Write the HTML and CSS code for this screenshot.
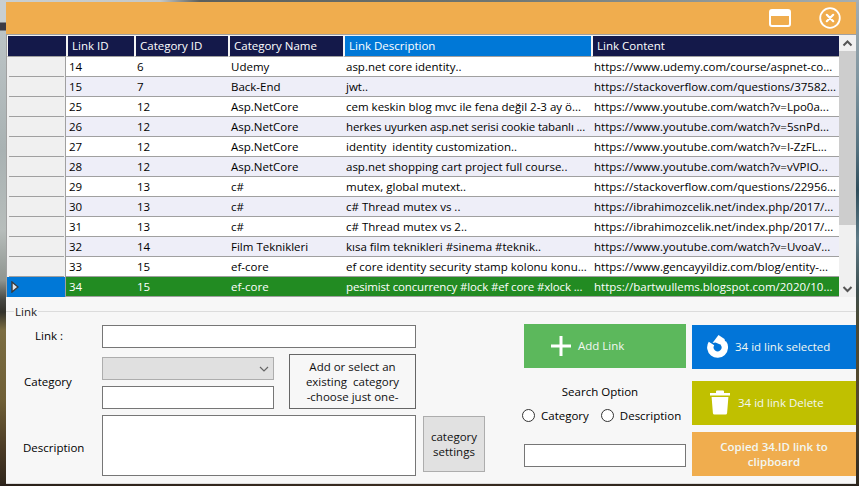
FILE: index.html
```html
<!DOCTYPE html>
<html lang="en">
<head>
    <meta charset="UTF-8">
    <meta name="viewport" content="width=device-width, initial-scale=1.0">
    <title>Links</title>
    <link rel="stylesheet" href="styles.css">
</head>
<body>
    <div class="window">
        <div class="titlebar">
            <svg class="title-icon" width="22" height="18" viewBox="0 0 22 18"><rect x="1" y="1" width="20" height="16" rx="2" fill="none" stroke="#fff" stroke-width="2"/><rect x="1" y="1" width="20" height="6" rx="1" fill="#fff"/></svg>
            <svg class="title-icon" width="22" height="22" viewBox="0 0 22 22"><circle cx="11" cy="11" r="9.8" fill="none" stroke="#fff" stroke-width="1.8"/><path d="M7.8 7.8l6.4 6.4M14.2 7.8l-6.4 6.4" stroke="#fff" stroke-width="2.2" stroke-linecap="round"/></svg>
        </div>

        <div class="grid-wrap">
            <table class="grid">
                <colgroup>
                    <col class="c-head"><col class="c-id"><col class="c-cat"><col class="c-name"><col class="c-text"><col class="c-text">
                </colgroup>
                <thead>
                    <tr>
                        <th class="corner"></th>
                        <th>Link ID</th>
                        <th>Category ID</th>
                        <th>Category Name</th>
                        <th class="sorted">Link Description</th>
                        <th>Link Content</th>
                    </tr>
                </thead>
                <tbody>
                    <tr><td class="row-head"></td><td>14</td><td>6</td><td>Udemy</td><td>asp.net core identity..</td><td>https://www.udemy.com/course/aspnet-co...</td></tr>
                    <tr class="alt"><td class="row-head"></td><td>15</td><td>7</td><td>Back-End</td><td>jwt..</td><td>https://stackoverflow.com/questions/37582...</td></tr>
                    <tr><td class="row-head"></td><td>25</td><td>12</td><td>Asp.NetCore</td><td>cem keskin blog mvc ile fena değil 2-3 ay ö...</td><td>https://www.youtube.com/watch?v=Lpo0a...</td></tr>
                    <tr class="alt"><td class="row-head"></td><td>26</td><td>12</td><td>Asp.NetCore</td><td class="tight">herkes uyurken asp.net serisi cookie tabanlı ...</td><td>https://www.youtube.com/watch?v=5snPd...</td></tr>
                    <tr><td class="row-head"></td><td>27</td><td>12</td><td>Asp.NetCore</td><td>identity&nbsp; identity customization..</td><td>https://www.youtube.com/watch?v=I-ZzFL...</td></tr>
                    <tr class="alt"><td class="row-head"></td><td>28</td><td>12</td><td>Asp.NetCore</td><td>asp.net shopping cart project full course..</td><td>https://www.youtube.com/watch?v=vVPIO...</td></tr>
                    <tr><td class="row-head"></td><td>29</td><td>13</td><td>c#</td><td>mutex, global mutext..</td><td>https://stackoverflow.com/questions/22956...</td></tr>
                    <tr class="alt"><td class="row-head"></td><td>30</td><td>13</td><td>c#</td><td>c# Thread mutex vs ..</td><td>https://ibrahimozcelik.net/index.php/2017/...</td></tr>
                    <tr><td class="row-head"></td><td>31</td><td>13</td><td>c#</td><td>c# Thread mutex vs 2..</td><td>https://ibrahimozcelik.net/index.php/2017/...</td></tr>
                    <tr class="alt"><td class="row-head"></td><td>32</td><td>14</td><td>Film Teknikleri</td><td>kısa film teknikleri #sinema #teknik..</td><td>https://www.youtube.com/watch?v=UvoaV...</td></tr>
                    <tr><td class="row-head"></td><td>33</td><td>15</td><td>ef-core</td><td>ef core identity security stamp kolonu konu...</td><td>https://www.gencayyildiz.com/blog/entity-...</td></tr>
                    <tr class="selected">
                        <td class="row-head">
                            <svg class="row-arrow" width="8" height="12" viewBox="0 0 8 12"><path d="M1 1l6 5-6 5z" fill="#dfe6ec" stroke="#3a3a3a" stroke-width="1.4"/></svg>
                        </td>
                        <td>34</td><td>15</td><td>ef-core</td><td class="tight">pesimist concurrency #lock #ef core #xlock ...</td><td>https://bartwullems.blogspot.com/2020/10...</td>
                    </tr>
                </tbody>
            </table>
            <div class="scrollbar">
                <svg class="scroll-btn" width="17" height="15" viewBox="0 0 17 15"><path d="M4.5 9.5l4-4 4 4" fill="none" stroke="#555" stroke-width="2"/></svg>
                <div class="scroll-track"><div class="scroll-thumb"></div></div>
                <svg class="scroll-btn" width="17" height="15" viewBox="0 0 17 15"><path d="M4.5 5l4 4 4-4" fill="none" stroke="#555" stroke-width="2"/></svg>
            </div>
        </div>

        <div class="group">
            <div class="legend"><span>Link</span></div>
            <div class="group-body">
                <div class="form-grid">
                    <label class="lbl lbl-link">Link :</label>
                    <input class="field wide" type="text">

                    <label class="lbl lbl-cat">Category</label>
                    <div class="cat-stack">
                        <div class="combo">
                            <svg width="10" height="6" viewBox="0 0 10 6"><path d="M1 1l4 4 4-4" fill="none" stroke="#666" stroke-width="1.2"/></svg>
                        </div>
                        <input class="field" type="text">
                    </div>
                    <div class="note">Add or select an<br>existing&nbsp; category<br>-choose just one-</div>

                    <label class="lbl lbl-desc">Description</label>
                    <textarea class="field wide area"></textarea>
                    <button class="settings" type="button">category<br>settings</button>
                </div>

                <div class="search-col">
                    <button class="action add" type="button">
                        <svg width="20" height="20" viewBox="0 0 20 20"><path d="M10 0v20M0 10h20" stroke="#fff" stroke-width="3"/></svg>
                        <span>Add Link</span>
                    </button>
                    <div class="search-title">Search Option</div>
                    <div class="radios">
                        <label class="radio"><input type="radio" name="opt">Category</label>
                        <label class="radio"><input type="radio" name="opt">Description</label>
                    </div>
                    <input class="field search" type="text">
                </div>

                <div class="action-col">
                    <button class="action select" type="button">
                        <svg width="22" height="23" viewBox="0 0 22 23"><path d="M5.500 8.500A7.200 7.200 0 1 0 17.300 8" fill="none" stroke="#fff" stroke-width="6.500"/><path d="M12.500 0l6 4 2 8-7.500-3-3.500-1.500-3 .5z" fill="#fff"/></svg>
                        <span>34 id link selected</span>
                    </button>
                    <button class="action remove" type="button">
                        <svg width="20" height="25" viewBox="0 0 20 25"><path d="M0 3h20v2.400H0zM6 1.500Q6 .5 7 .5h6q1 0 1 1V3H6z" fill="#fff"/><path d="M1.600 7h16.800l-1.300 16q-.1 1.500-1.600 1.500H4.500Q3 24.500 2.900 23z" fill="#fff"/></svg>
                        <span>34 id link Delete</span>
                    </button>
                    <button class="action copy" type="button">Copied 34.ID link to<br>clipboard</button>
                </div>
            </div>
        </div>
    </div>
</body>
</html>
```

FILE: styles.css
```css
html {
    background-color: #6b6f60;
}

body {
    margin: 0;
    height: 486px;
    overflow: hidden;
    font-family: 'Open Sans', 'Noto Sans', sans-serif;
    font-size: 11.5px;
    color: #000;
    background-image:
        linear-gradient(to right, #c9cfd1 0, #c4c8c8 160px, #5c5f5c 200px, #6f7672 500px, #a6afb2 859px),
        linear-gradient(to right, #2a211a 0, #3a2c20 400px, #29231c 859px),
        linear-gradient(to bottom, #c8cfd2 0, #c8cfd2 22px, #3c3a44 23px, #3c3a44 30px, #bcc4c6 31px, #a9b2b3 150px, #b7bdbb 230px, #8f9590 280px, #454641 300px, #33322b 312px, #7b6d42 330px, #6f5f36 400px, #4a3a25 450px, #2f261c 486px),
        linear-gradient(to bottom, #a2adb3 0, #7f95a0 80px, #53707e 150px, #2f4d5b 190px, #5f7c88 240px, #3e4f50 290px, #4b4a34 320px, #55482c 400px, #2e281e 486px);
    background-size: 100% 2px, 100% 2px, 6px 100%, 3px 100%;
    background-position: left top, left bottom, left top, right top;
    background-repeat: no-repeat;
}

.window {
    margin: 2px 3px 2px 6px;
    height: 482px;
    box-sizing: border-box;
    display: flex;
    flex-direction: column;
    background-color: #f7f7f7;
    border-bottom: 1px solid #dcdcdc;
}

.titlebar {
    height: 32px;
    flex: none;
    display: flex;
    justify-content: flex-end;
    align-items: center;
    gap: 28px;
    padding-right: 15px;
    background-color: #f0ad4e;
}

.title-icon {
    display: block;
}

.grid-wrap {
    display: flex;
    flex: none;
    height: 263px;
    box-sizing: border-box;
    border-top: 1px solid #a0a0a0;
    border-left: 1px solid #a0a0a0;
    background-color: #f0f0f0;
}

.grid {
    width: 832px;
    table-layout: fixed;
    border-collapse: separate;
    border-spacing: 0;
    align-self: flex-start;
    margin-top: 1px;
}

.c-head { width: 59px; }
.c-id { width: 68px; }
.c-cat { width: 94px; }
.c-name { width: 115px; }
.c-text { width: 248px; }

.grid th {
    height: 21px;
    padding: 0 0 1px 4px;
    box-sizing: border-box;
    text-align: left;
    font-weight: 400;
    color: #fff;
    background-color: #14194a;
    border-left: 2px solid #f4f4f4;
    border-bottom: 1px solid #a0a0a0;
    white-space: nowrap;
    overflow: hidden;
}

.grid th.corner {
    border-left: 1px solid #f4f4f4;
}

.grid th.sorted {
    background-color: #0078d7;
}

.grid td {
    height: 20px;
    padding: 0 0 0 3px;
    box-sizing: border-box;
    background-color: #fff;
    border-bottom: 1px solid #a0a0a0;
    white-space: nowrap;
    overflow: hidden;
}

.grid td.tight {
    letter-spacing: -0.15px;
}

.grid tr.alt td {
    background-color: #eeeef8;
}

.grid tr.selected td {
    background-color: #228b22;
    color: #fff;
}

.grid td.row-head,
.grid tr.alt td.row-head {
    padding: 0;
    border-bottom: none;
    border-right: 1px solid #a0a0a0;
    background: linear-gradient(#a0a0a0, #a0a0a0) no-repeat 2px bottom / 55px 1px, #f0f0f0;
}

.grid tr.selected td.row-head {
    background: #0078d7;
}

.row-arrow {
    display: block;
    margin-left: 4px;
}

.scrollbar {
    width: 17px;
    flex: none;
    display: flex;
    flex-direction: column;
    background-color: #f0f0f0;
    padding-top: 1px;
}

.scroll-btn {
    display: block;
    flex: none;
}

.scroll-track {
    flex: 1;
}

.scroll-thumb {
    height: 174px;
    background-color: #cdcdcd;
}

.group {
    flex: 1;
    padding-top: 7px;
}

.legend {
    display: flex;
    align-items: center;
    height: 14px;
    color: #222;
    background: linear-gradient(#dcdcdc, #dcdcdc) no-repeat left 7px / 100% 1px;
    margin-bottom: 7px;
}

.legend span {
    margin-left: 8px;
    padding: 0 1px;
    background-color: #f7f7f7;
}

.group-body {
    display: flex;
    align-items: flex-start;
}

.form-grid {
    flex: none;
    display: grid;
    grid-template-columns: 96px 172px 142px 69px;
    grid-template-rows: 23px 55px 61px;
    row-gap: 6px;
    align-items: center;
}

.lbl {
    grid-column: 1;
}

.lbl-link { margin-left: 29px; padding-bottom: 2px; }
.lbl-cat { margin-left: 18px; }
.lbl-desc { margin-left: 17px; padding-top: 3px; }

.field {
    display: block;
    box-sizing: border-box;
    width: 100%;
    height: 23px;
    margin: 0;
    padding: 1px 3px;
    background-color: #fff;
    border: 1px solid #767676;
    border-radius: 0;
    font: inherit;
    resize: none;
}

.wide {
    grid-column: 2 / span 2;
    width: 314px;
}

.area {
    height: 61px;
}

.cat-stack {
    align-self: end;
    display: flex;
    flex-direction: column;
    gap: 6px;
}

.combo {
    height: 23px;
    box-sizing: border-box;
    display: flex;
    justify-content: flex-end;
    align-items: center;
    padding: 0 4px 0 0;
    background-color: #e0e0e0;
    border: 1px solid #adadad;
}

.note {
    margin-left: 15px;
    width: 127px;
    height: 55px;
    box-sizing: border-box;
    border: 1px solid #666;
    display: flex;
    align-items: center;
    justify-content: center;
    text-align: center;
    line-height: 15px;
    color: #111;
}

.settings {
    margin: 0 0 4px 7px;
    width: 62px;
    height: 56px;
    padding: 0;
    background-color: #e1e1e1;
    border: 1px solid #adadad;
    color: #111;
    font: inherit;
    line-height: 15px;
    align-self: end;
}

.search-col {
    flex: none;
    width: 162px;
    margin: -1px 6px 0 39px;
}

.action {
    box-sizing: border-box;
    display: flex;
    align-items: center;
    width: 100%;
    height: 44px;
    padding: 0;
    border: none;
    color: #f2f7f2;
    font: inherit;
}

.add {
    gap: 7px;
    padding: 0 0 1px 27px;
    background-color: #5cb85c;
}

.search-title {
    margin-top: 16px;
    padding-right: 10px;
    height: 16px;
    line-height: 16px;
    text-align: center;
}

.radios {
    display: flex;
    gap: 12px;
    margin: 7px 0 0 -2px;
    white-space: nowrap;
}

.radio {
    display: flex;
    align-items: center;
    gap: 6px;
    height: 16px;
}

.radio input {
    appearance: none;
    width: 13px;
    height: 13px;
    margin: 0;
    background-color: #fff;
    border: 1px solid #333;
    border-radius: 50%;
}

.search {
    margin-top: 21px;
}

.action-col {
    flex: none;
    width: 164px;
    display: flex;
    flex-direction: column;
}

.select {
    gap: 7px;
    padding: 0 0 1px 14px;
    background-color: #0275d8;
}

.remove {
    gap: 8px;
    padding: 0 0 1px 18px;
    margin-top: 12px;
    background-color: #c0c000;
}

.copy {
    display: block;
    margin-top: 7px;
    text-align: center;
    line-height: 15px;
    font-weight: 600;
    background-color: #f0ad4e;
}
```
